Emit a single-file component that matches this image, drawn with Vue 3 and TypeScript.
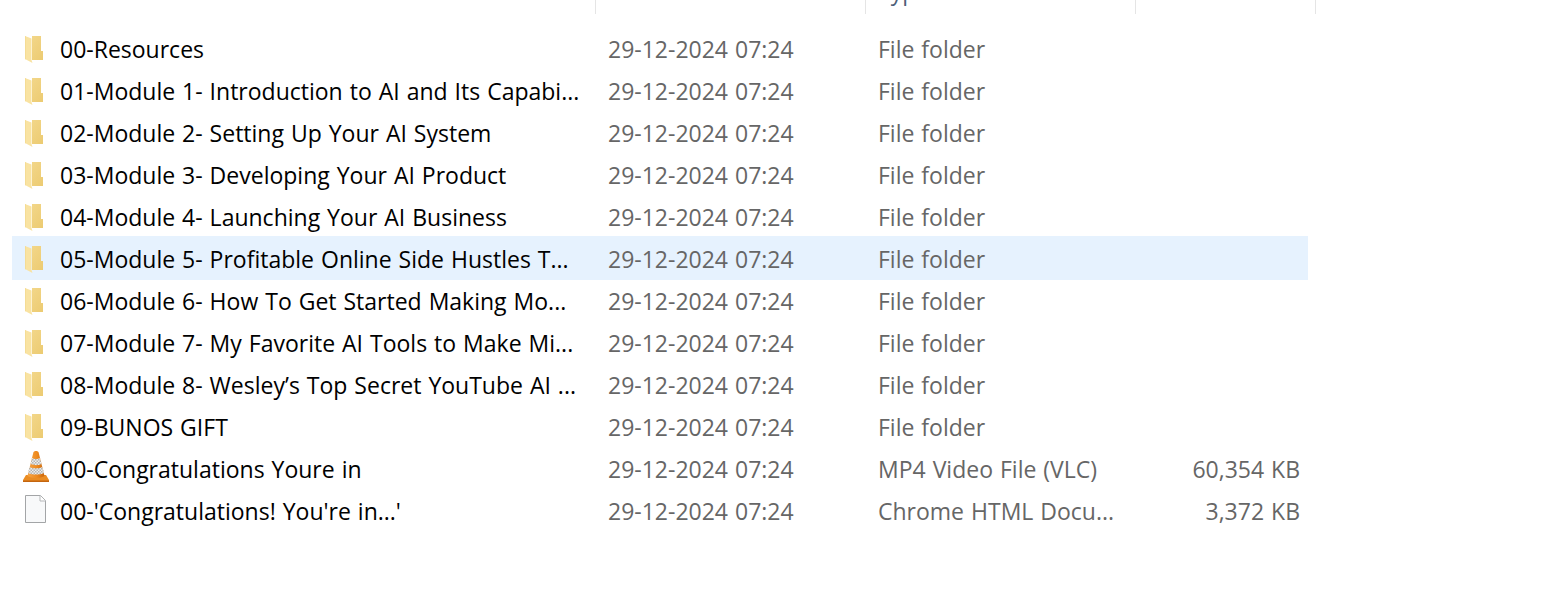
<script setup lang="ts">
interface FileRow {
  name: string
  type: string
  size?: string
  icon: 'folder' | 'vlc' | 'file'
}

const columns = ['', '', 'Type', '']
const modified = '29-12-2024 07:24'
const hoveredIndex = 5

const rows: FileRow[] = [
  { name: '00-Resources', type: 'File folder', icon: 'folder' },
  { name: '01-Module 1- Introduction to AI and Its Capabi...', type: 'File folder', icon: 'folder' },
  { name: '02-Module 2- Setting Up Your AI System', type: 'File folder', icon: 'folder' },
  { name: '03-Module 3- Developing Your AI Product', type: 'File folder', icon: 'folder' },
  { name: '04-Module 4- Launching Your AI Business', type: 'File folder', icon: 'folder' },
  { name: '05-Module 5- Profitable Online Side Hustles T...', type: 'File folder', icon: 'folder' },
  { name: '06-Module 6- How To Get Started Making Mo...', type: 'File folder', icon: 'folder' },
  { name: '07-Module 7- My Favorite AI Tools to Make Mi...', type: 'File folder', icon: 'folder' },
  { name: '08-Module 8- Wesley’s Top Secret YouTube AI ...', type: 'File folder', icon: 'folder' },
  { name: '09-BUNOS GIFT', type: 'File folder', icon: 'folder' },
  { name: '00-Congratulations Youre in', type: 'MP4 Video File (VLC)', size: '60,354 KB', icon: 'vlc' },
  { name: "00-'Congratulations! You're in...'", type: 'Chrome HTML Docu...', size: '3,372 KB', icon: 'file' },
]
</script>

<template>
  <div class="explorer">
    <div class="header">
      <div v-for="(col, i) in columns" :key="i" class="header-cell">
        <span class="header-label">{{ col }}</span>
      </div>
    </div>

    <div class="list">
      <div v-for="(row, i) in rows" :key="i" class="row" :class="{ hovered: i === hoveredIndex }">
        <div class="name-cell">
          <svg v-if="row.icon === 'folder'" class="icon" width="24" height="28" viewBox="0 0 24 28">
            <defs>
              <linearGradient :id="`back-${i}`" x1="0" y1="0" x2="1" y2="1">
                <stop offset="0" stop-color="#f4d98e" />
                <stop offset="1" stop-color="#eccb72" />
              </linearGradient>
            </defs>
            <path d="M3 1h16v15h2v9H10V1z" :fill="`url(#back-${i})`" />
            <path d="M3 1l6.500 2.500V25l1 3-7.500-4z" fill="#f9e3a2" />
            <path d="M3 1l1 .4V24.500L3 24z" fill="#f5dc94" />
          </svg>
          <svg v-else-if="row.icon === 'vlc'" class="icon icon-vlc" width="26" height="32" viewBox="0 0 26 32">
            <defs>
              <pattern id="checker" width="3" height="3" patternUnits="userSpaceOnUse">
                <rect width="3" height="3" fill="#eeeeec" />
                <rect width="1.500" height="1.500" fill="#b4b4b2" />
                <rect x="1.500" y="1.500" width="1.500" height="1.500" fill="#b4b4b2" />
              </pattern>
              <linearGradient id="cone" x1="0" y1="0" x2="1" y2="0">
                <stop offset="0" stop-color="#f6a445" />
                <stop offset=".55" stop-color="#ee8a1e" />
                <stop offset="1" stop-color="#c9660c" />
              </linearGradient>
            </defs>
            <path d="M3 25h20l3 5v2H0v-2z" fill="#ea8c22" />
            <path d="M0 30.500h26v1.500H0z" fill="#c4650f" />
            <path d="M10.500 2c1-1.500 4-1.500 5 0l6 24c-4 2.500-13 2.500-17 0z" fill="url(#cone)" />
            <path d="M9 8c2.300 1.300 5.700 1.300 8 0l1.500 6c-3 1.600-8 1.600-11 0z" fill="url(#checker)" />
            <path d="M6.500 17c3.800 1.700 9.200 1.700 13 0l1.500 6c-4.500 2-11.500 2-16 0z" fill="url(#checker)" />
          </svg>
          <svg v-else class="icon icon-file" width="24" height="28" viewBox="0 0 24 28">
            <path d="M3.500 .5h15l5 5v22h-20z" fill="#f8f9fa" stroke="#a3a5a7" />
            <path d="M18 .5v5.500h5.500" fill="#fff" stroke="#b5b7b9" />
          </svg>
          <span class="name">{{ row.name }}</span>
        </div>
        <div class="meta date">{{ modified }}</div>
        <div class="meta type">{{ row.type }}</div>
        <div class="meta size">{{ row.size }}</div>
      </div>
    </div>
  </div>
</template>

<style>
html,
body {
  margin: 0;
  background: #fff;
}
</style>

<style scoped>
.explorer {
  width: 1548px;
  height: 610px;
  overflow: hidden;
  background: #fff;
  font-family: 'Open Sans', 'Noto Sans', sans-serif;
  font-size: 23px;
  word-spacing: 1px;
}

.header {
  display: grid;
  grid-template-columns: 596px 270px 270px 180px;
  height: 14px;
  overflow: hidden;
}

.header-cell {
  border-right: 1px solid #e5e5e5;
  padding-left: 12px;
  line-height: 10px;
  height: 14px;
  color: #4c607a;
  overflow: hidden;
}

.header-label {
  display: block;
  margin-top: -14px;
}

.list {
  margin-top: 14px;
  margin-left: 12px;
  width: 1296px;
}

.row {
  display: grid;
  grid-template-columns: 584px 270px 270px 172px;
  height: 42px;
  align-items: center;
}

/* the highlight reaches 2px above its row */
.row.hovered {
  background: #e6f2fe;
  box-shadow: 0 -2px 0 #e6f2fe;
}

.name-cell {
  display: flex;
  align-items: center;
  position: relative;
  padding-left: 48px;
  height: 100%;
}

.icon {
  position: absolute;
  left: 10px;
  top: 50%;
  transform: translateY(-50%);
}

.icon-vlc {
  left: 11px;
  margin-top: -3px;
}

.icon-file {
  margin-top: -2px;
}

.name {
  color: #000;
  white-space: nowrap;
}

.meta {
  color: #666;
  padding-left: 12px;
  white-space: nowrap;
}

.size {
  padding-left: 0;
  padding-right: 8px;
  text-align: right;
}
</style>
